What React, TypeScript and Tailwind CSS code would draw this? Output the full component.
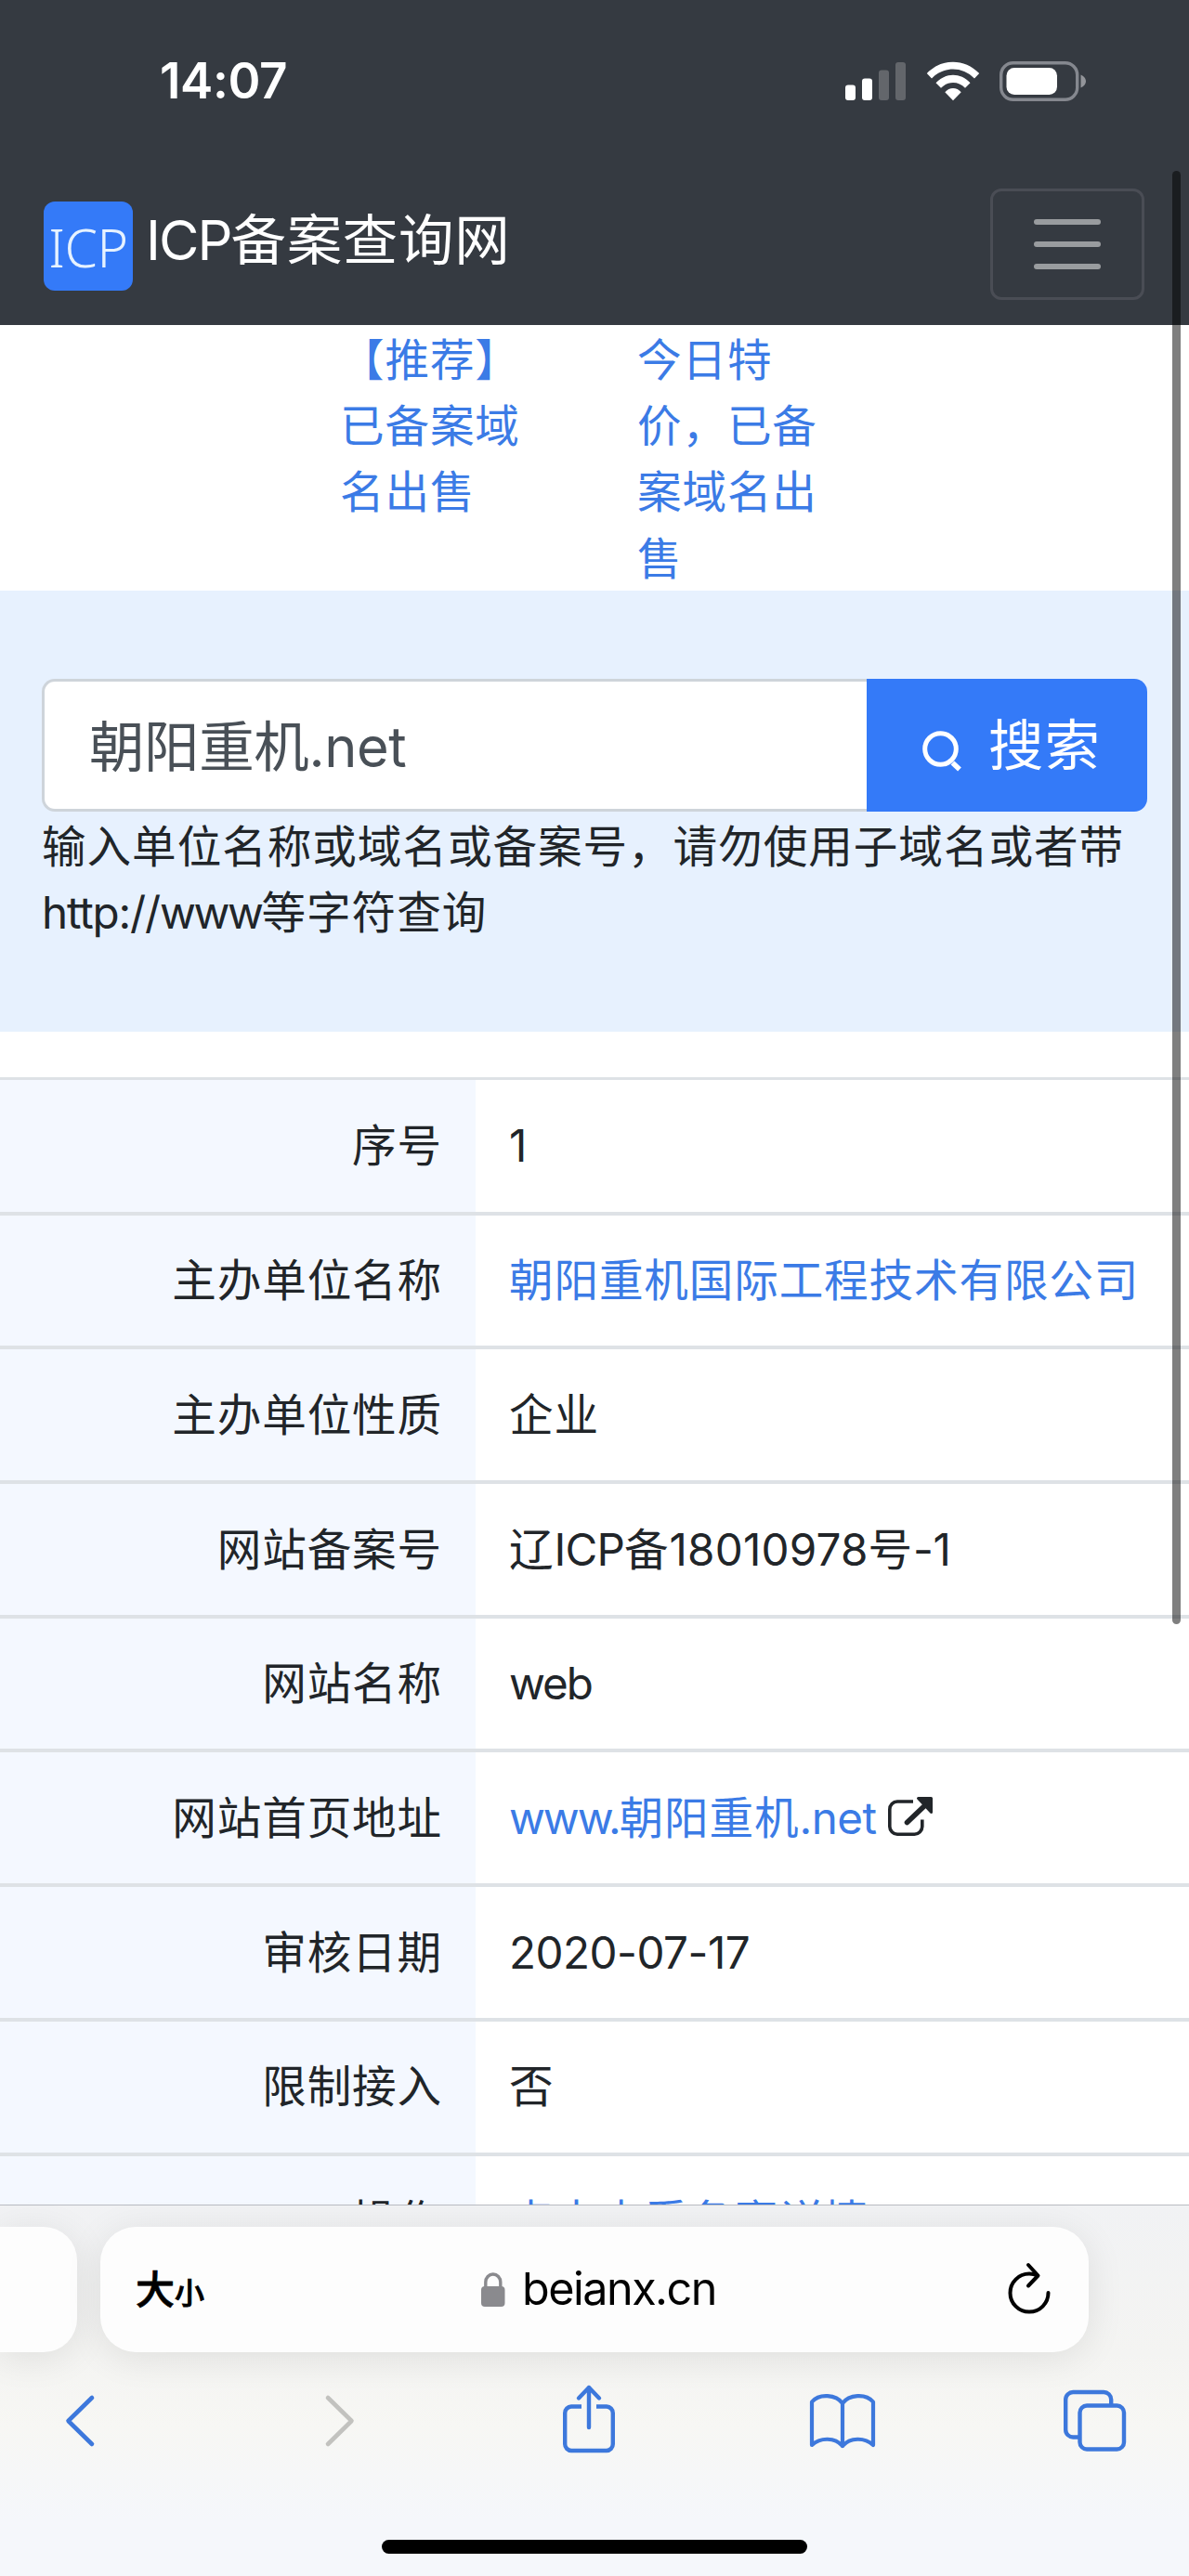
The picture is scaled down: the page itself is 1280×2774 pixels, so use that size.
import React from "react";

const FONT = "font-['Inter','Noto_Sans_CJK_SC',sans-serif]";

function StatusBar() {
  return (
    <div className="flex h-[175px] items-center justify-between pl-[172px] pr-[111px]">
      <span className="text-[53px] font-semibold leading-none tracking-[-0.4px] text-white">14:07</span>
      <div className="flex items-center">
        <svg width="66" height="43" viewBox="0 0 66 43" className="mr-[21px]">
          <rect x="0" y="25.5" width="11" height="16.5" rx="3" fill="#fff" />
          <rect x="18" y="18.5" width="11" height="23.5" rx="3" fill="#fff" />
          <rect x="36" y="9.5" width="11" height="32.5" rx="3" fill="#63666b" />
          <rect x="54" y="1" width="11" height="41" rx="3" fill="#63666b" />
        </svg>
        <svg width="58" height="43" viewBox="0 0 58 43" fill="#fff" className="mr-[21px]">
          <path d="M0.8 13C16.5 -3.5 41.5 -3.5 57.2 13L52 18.5C39 5.2 19 5.2 6 18.5Z" />
          <path d="M10.5 23.3C21 12 37 12 47.5 23.3L42 28.8C35 21.2 23 21.2 16 28.8Z" />
          <path d="M20.3 33.2C25 27.5 33 27.5 37.7 33.2L29 42.2Z" />
        </svg>
        <svg width="93" height="43" viewBox="0 0 93 43">
          <rect x="1.7" y="1.7" width="82" height="39.6" rx="13" fill="none" stroke="#85888f" strokeWidth="3.4" />
          <rect x="7.5" y="7" width="54.5" height="29" rx="8.5" fill="#fff" />
          <path d="M87.5 14.5C91.5 16.5 93 19 93 21.5C93 24 91.5 26.5 87.5 28.5Z" fill="#93959a" />
        </svg>
      </div>
    </div>
  );
}

function NavBar() {
  return (
    <div className="flex h-[175px] items-start justify-between pl-[47px] pr-[48px]">
      <div className="flex">
        <div className="mt-[42px] flex h-[96px] w-[96px] items-center justify-center rounded-[12px] bg-[#347af8]">
          <span className="mt-[2px] font-['Noto_Sans',sans-serif] text-[57px] font-light leading-none tracking-[-0.5px] text-[#e6f2ff]">
            ICP
          </span>
        </div>
        <span className="ml-[14px] mt-[38px] whitespace-nowrap text-[59.5px] leading-[90px] tracking-[0.7px] text-white">
          <span className="tracking-[-2px]">ICP</span>备案查询网
        </span>
      </div>
      <div className="mt-[28px] flex h-[120px] w-[166px] flex-col items-center justify-center gap-[18px] rounded-[12px] border-[3px] border-[#4a4d55]">
        <span className="h-[6px] w-[72px] rounded-full bg-[#999c9f]" />
        <span className="h-[6px] w-[72px] rounded-full bg-[#999c9f]" />
        <span className="h-[6px] w-[72px] rounded-full bg-[#999c9f]" />
      </div>
    </div>
  );
}

function SearchBlock() {
  return (
    <section className="h-[475px] bg-[#e7f1fe] px-[45px] pt-[95px]">
      <div className="flex h-[143px]">
        <div className="flex flex-1 items-center rounded-l-[14px] border-[3px] border-r-0 border-[#ced4da] bg-white pl-[48px] text-[59.5px] leading-none tracking-[-0.4px] text-[#495057]">
          <span className="mt-[5px] whitespace-nowrap">朝阳重机.net</span>
        </div>
        <div className="flex w-[302px] items-center rounded-r-[14px] bg-[#347af8] pl-[59px] text-white">
          <svg width="46" height="46" viewBox="0 0 46 46" fill="none" stroke="#fff" className="mt-[14px]">
            <circle cx="20.5" cy="19.5" r="16.8" strokeWidth="5" />
            <path d="M33.5 34.5L41 41.5" strokeWidth="5.5" />
          </svg>
          <span className="ml-[26px] whitespace-nowrap text-[59.5px] leading-none tracking-[1px]">搜索</span>
        </div>
      </div>
      <p className="whitespace-nowrap pt-[2px] text-[47.6px] leading-[71.4px] tracking-[0.95px] text-[#212529]">
        输入单位名称或域名或备案号，请勿使用子域名或者带
        <br />
        <span className="tracking-[-1.2px]">http://</span>
        <span className="tracking-[-2.4px]">www</span>等字符查询
      </p>
    </section>
  );
}

function ExternalIcon() {
  return (
    <svg width="50" height="44" viewBox="0 0 50 44" fill="none" stroke="#212529" className="-mt-[2px] ml-[12px]">
      <path d="M27 5H10A8.5 8.5 0 0 0 1.8 13.5V32A8.5 8.5 0 0 0 10 40.3H28.5A8.5 8.5 0 0 0 36.8 32V24.5" strokeWidth="3.6" />
      <path d="M20.5 27.5L40 9" strokeWidth="5.6" strokeLinecap="round" />
      <path d="M32.5 1.5H46.5V16.5Z" fill="#212529" strokeWidth="3" strokeLinejoin="round" />
    </svg>
  );
}

const rows: { label: string; value: string; link?: boolean; external?: boolean }[] = [
  { label: "序号", value: "1" },
  { label: "主办单位名称", value: "朝阳重机国际工程技术有限公司", link: true },
  { label: "主办单位性质", value: "企业" },
  { label: "网站备案号", value: "辽ICP备18010978号-1" },
  { label: "网站名称", value: "web" },
  { label: "网站首页地址", value: "www.朝阳重机.net", link: true, external: true },
  { label: "审核日期", value: "2020-07-17" },
  { label: "限制接入", value: "否" },
  { label: "操作", value: "点击查看备案详情", link: true },
];

function tracking(run: string) {
  if (/^w/.test(run)) return "tracking-[-2.1px]";
  if (/^[A-Z]/.test(run)) return "tracking-[-0.8px]";
  if (/^\d{8}$/.test(run)) return "tracking-[0.2px]";
  if (/^[\u0000-\u007f]/.test(run)) return "tracking-[-0.5px]";
  return "tracking-[0.85px]";
}

/** Splits text into Latin and Chinese runs so that each gets its own tracking. */
function Mixed({ text }: { text: string }) {
  const parts = text.match(/[\u0000-\u007f]+|[^\u0000-\u007f]+/g) ?? [];
  return (
    <>
      {parts.map((p, i) => (
        <span key={i} className={tracking(p)}>
          {p}
        </span>
      ))}
    </>
  );
}

function Records() {
  return (
    <div className="mt-[49px] text-[47.6px] leading-[71.4px] text-[#212529]">
      {rows.map((r) => (
        <div key={r.label} className="flex h-[144.7px] border-t-4 border-[#dee2e6] first:border-t-[3px]">
          <div className="flex w-[512px] items-center justify-end bg-[#f4f8ff] pr-[36px]">
            <span>
              <Mixed text={r.label} />
            </span>
          </div>
          <div className="flex flex-1 items-center whitespace-nowrap bg-white pl-[36px]">
            <span className={r.link ? "text-[#3b7be6]" : ""}>
              <Mixed text={r.value} />
            </span>
            {r.external && <ExternalIcon />}
          </div>
        </div>
      ))}
    </div>
  );
}

function BrowserChrome() {
  return (
    <footer className="flex h-[400px] shrink-0 flex-col border-t border-[#b9bcc2] bg-[linear-gradient(180deg,#f1f2f4_0%,#f4f4f2_40%,#f7f7f4_60%,#f5f7fb_85%,#f5f7fb_100%)]">
      <div className="mt-[23px] flex h-[135px] gap-[25px]">
        <div className="w-[83px] rounded-r-[36px] bg-[#fdfdfd] shadow-[0_6px_40px_rgba(0,0,0,0.09)]" />
        <div className="flex w-[1064px] items-center justify-between rounded-[38px] bg-[#fdfdfd] pl-[38px] pr-[41px] text-black shadow-[0_6px_40px_rgba(0,0,0,0.09)]">
          <div className="flex w-[80px] items-baseline whitespace-nowrap font-medium leading-none [-webkit-text-stroke:0.8px_#000]">
            <span className="text-[42px]">大</span>
            <span className="text-[32px]">小</span>
          </div>
          <div className="flex items-center pr-[22px]">
            <svg width="26" height="38" viewBox="0 0 26 38" className="mr-[18px]">
              <rect x="0" y="15" width="25.5" height="22" rx="4" fill="#8a8a8e" />
              <path d="M4.8 16V10.5A8 8.5 0 0 1 20.8 10.5V16" fill="none" stroke="#8a8a8e" strokeWidth="3.4" />
            </svg>
            <span className="text-[48.5px] leading-none tracking-[-1.5px]">beianx.cn</span>
          </div>
          <svg width="46" height="56" viewBox="0 0 46 56" fill="none" stroke="#000" strokeWidth="4" strokeLinecap="round" strokeLinejoin="round" className="-mt-[4px]">
            <path d="M32 14.5C29 13.2 26 12.6 23 12.6A20.5 20.5 0 1 0 43.5 33" />
            <path d="M22 3L32.5 14.5L22 25.5" />
          </svg>
        </div>
      </div>
      <div className="mt-[29px] flex h-[90px] items-center pl-[69px] pr-[66px]">
        <svg width="34" height="58" viewBox="0 0 34 58" fill="none" stroke="#3d78dc" strokeWidth="4.6" strokeLinecap="round" strokeLinejoin="round">
          <path d="M30 4L4.5 29L30 54" />
        </svg>
        <svg width="34" height="58" viewBox="0 0 34 58" fill="none" stroke="#c2c2bf" strokeWidth="4.6" strokeLinecap="round" strokeLinejoin="round" className="ml-[246px]">
          <path d="M4 4L29.5 29L4 54" />
        </svg>
        <svg width="60" height="76" viewBox="0 0 60 76" fill="none" stroke="#3d78dc" strokeWidth="4.4" strokeLinecap="round" strokeLinejoin="round" className="-mt-[4px] ml-[221px]">
          <path d="M22 24.5H11A7 7 0 0 0 4.2 31.5V65A7 7 0 0 0 11 72H49A7 7 0 0 0 55.8 65V31.5A7 7 0 0 0 49 24.5H38" strokeLinecap="butt" />
          <path d="M30 47V4M19 15.5L30 4L41 15.5" />
        </svg>
        <svg width="74" height="62" viewBox="0 0 74 62" fill="none" stroke="#3d78dc" strokeWidth="4.2" strokeLinecap="round" strokeLinejoin="round" className="ml-[206px]">
          <path d="M37 12C30 2.5 12 1 4 10.5V57C13 48.5 29 48.5 37 58C45 48.5 61 48.5 70 57V10.5C62 1 44 2.5 37 12Z" />
          <path d="M37 12V58" />
        </svg>
        <svg width="70" height="70" viewBox="0 0 70 70" fill="none" stroke="#3d78dc" strokeWidth="4.4" className="ml-auto">
          <path d="M18 52.5H11.5A8 8 0 0 1 3.2 44.5V12A8 8 0 0 1 11.5 4H44A8 8 0 0 1 52.2 12V18.5" />
          <rect x="18.5" y="18.5" width="47.5" height="47" rx="7.5" />
        </svg>
      </div>
      <div className="mx-auto mt-[83px] h-[15px] w-[458px] rounded-full bg-black" />
    </footer>
  );
}

export default function App() {
  return (
    <div className={`relative flex h-[2774px] w-[1280px] flex-col overflow-hidden bg-white ${FONT}`}>
      <header className="h-[350px] shrink-0 bg-[#353a41]">
        <StatusBar />
        <NavBar />
      </header>
      <main className="h-[2024px] shrink-0 overflow-hidden">
        <div className="flex h-[286px] pl-[366px] pt-[2px] text-[47.6px] leading-[71.2px] tracking-[0.85px] text-[#3b7be6]">
          <div className="w-[320px] whitespace-nowrap">
            【推荐】
            <br />
            已备案域
            <br />
            名出售
          </div>
          <div className="whitespace-nowrap">
            今日特
            <br />
            价，已备
            <br />
            案域名出
            <br />售
          </div>
        </div>
        <SearchBlock />
        <Records />
      </main>
      <BrowserChrome />
      <div className="absolute left-[1262px] top-[184px] h-[1565px] w-[9px] rounded-full bg-black/50" />
    </div>
  );
}
